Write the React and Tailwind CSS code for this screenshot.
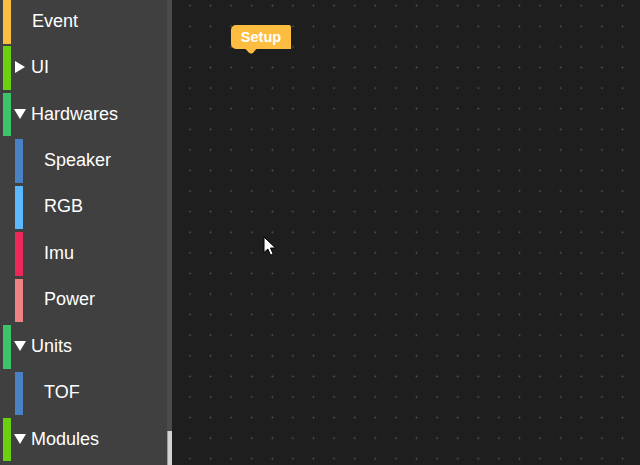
const items = [
  { label: "Event", color: "bg-[#fbbd42]", depth: 0, arrow: null },
  { label: "UI", color: "bg-[#6bd10f]", depth: 0, arrow: "right" },
  { label: "Hardwares", color: "bg-[#3cc468]", depth: 0, arrow: "down" },
  { label: "Speaker", color: "bg-[#4a80c4]", depth: 1, arrow: null },
  { label: "RGB", color: "bg-[#5cb9ff]", depth: 1, arrow: null },
  { label: "Imu", color: "bg-[#ec2759]", depth: 1, arrow: null },
  { label: "Power", color: "bg-[#ef8383]", depth: 1, arrow: null },
  { label: "Units", color: "bg-[#3cc468]", depth: 0, arrow: "down" },
  { label: "TOF", color: "bg-[#4a80c4]", depth: 1, arrow: null },
  { label: "Modules", color: "bg-[#6bd10f]", depth: 0, arrow: "down" },
];

function Arrow({ dir }) {
  if (dir === "right") {
    return (
      <svg width="12" height="12" viewBox="0 0 12 12" className="shrink-0">
        <path d="M1 0 L11 6 L1 12 Z" fill="#fff" />
      </svg>
    );
  }
  return (
    <svg width="12" height="12" viewBox="0 0 12 12" className="shrink-0">
      <path d="M0 1 L12 1 L6 11 Z" fill="#fff" />
    </svg>
  );
}

function Row({ item }) {
  return (
    <div className="h-[46.44px] flex items-start">
      <div className={`${item.depth ? "ml-[15px]" : "ml-[3px]"} w-[8px] h-[43.5px] mt-[2.5px] ${item.color}`} />
      <div
        className={`flex items-center h-[46.44px] gap-[5px] ${
          item.arrow ? "pl-[3px]" : "pl-[21px]"
        }`}
      >
        {item.arrow && <Arrow dir={item.arrow} />}
        <span className="text-[18px] text-white leading-none">{item.label}</span>
      </div>
    </div>
  );
}

function SetupBlock() {
  return (
    <div className="absolute left-[59px] top-[25px] w-[60px] h-[30px]">
      <svg width="60" height="30" viewBox="0 0 60 30" className="absolute inset-0">
        <path
          d="M5 0 H58 A2 2 0 0 1 60 2 V24 H26 C24 24 23 28.5 20 28.5 C17 28.5 16 24 14 24 H5 A5 5 0 0 1 0 19 V5 A5 5 0 0 1 5 0 Z"
          fill="#fdbd41"
        />
      </svg>
      <div className="absolute left-0 top-0 w-[60px] h-[24px] flex items-center justify-center text-white text-[14.5px] font-semibold leading-none">
        Setup
      </div>
    </div>
  );
}

export default function App() {
  return (
    <div
      className="w-[640px] h-[465px] flex overflow-hidden"
      style={{ fontFamily: '"Liberation Sans", Arial, sans-serif' }}
    >
      <aside className="w-[172px] h-full bg-[#404040] flex shrink-0">
        <div className="flex-1 flex flex-col -mt-[2.5px]">
          {items.map((item) => (
            <Row key={item.label} item={item} />
          ))}
        </div>
        <div className="w-[5px] h-full bg-[#4b4b4b] flex flex-col justify-end">
          <div className="h-[34px] bg-[#d2d2d2] border-l border-[#9a9a9a]" />
        </div>
      </aside>
      <main className="relative flex-1 h-full bg-[#1e1e1e] bg-[radial-gradient(circle,#555555_0.8px,transparent_1.1px)] bg-[size:20.6px_20.6px] bg-[position:7.7px_-4.6px]">
        <SetupBlock />
        <svg
          width="16"
          height="22"
          viewBox="0 0 16 22"
          className="absolute left-[91px] top-[236px]"
        >
          <path
            d="M1 1 L1 16.5 L4.8 13 L7.6 19.2 L10.2 18 L7.5 12 L12.5 12 Z"
            fill="#fff"
            stroke="#000"
            strokeWidth="1"
            strokeLinejoin="round"
          />
        </svg>
      </main>
    </div>
  );
}
